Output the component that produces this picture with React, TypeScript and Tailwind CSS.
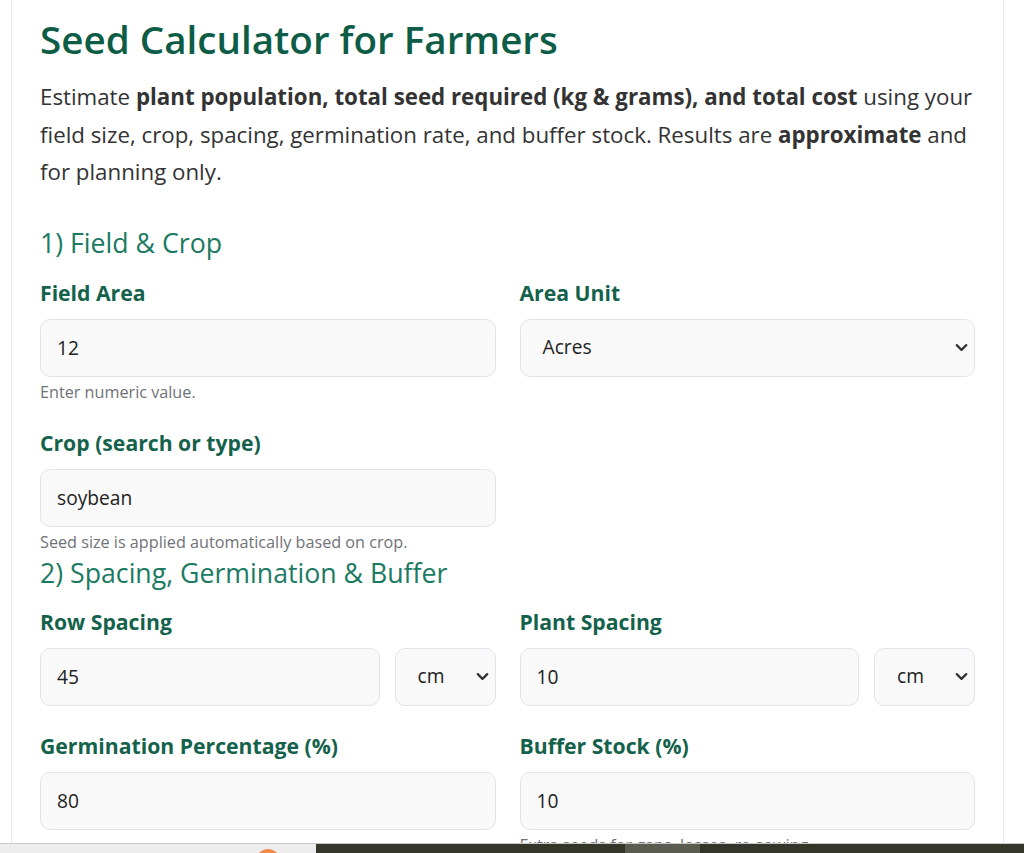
import { ChevronDown } from "lucide-react";

// field label
function Label({ children }: { children: React.ReactNode }) {
  return (
    <label className="block text-[21.2px] leading-[28px] font-bold text-[#14624b] mb-3">
      {children}
    </label>
  );
}

function TextInput({ value }: { value: string }) {
  return (
    <input
      defaultValue={value}
      className="block w-full h-[58px] rounded-[10px] border border-[#e2e4e8] bg-[#f9f9f9] px-4 text-[19.2px] text-[#222] outline-none"
    />
  );
}

function Select({ value, className }: { value: string; className?: string }) {
  return (
    <div
      className={
        "flex items-center justify-between h-[58px] rounded-[10px] border border-[#e2e4e8] bg-[#f9f9f9] pl-[22px] pr-[3px] text-[19.2px] text-[#222] " +
        (className ?? "")
      }
    >
      <span>{value}</span>
      <ChevronDown size={19} strokeWidth={2.8} className="text-[#333]" />
    </div>
  );
}

function Hint({ children }: { children: React.ReactNode }) {
  return (
    <p className="mt-1 text-[16.2px] leading-[22px] text-[#6f7276]">{children}</p>
  );
}

export default function App() {
  return (
    <div
      className="min-h-screen bg-white"
      style={{ fontFamily: '"Open Sans", "Noto Sans", sans-serif' }}
    >
      <div className="ml-[11px] w-[993px] border-x border-[#e8e9eb] bg-white px-[28px] pt-[16px] pb-10">
        <h1 className="text-[38.6px] leading-[46px] font-semibold text-[#0d5c46]">
          Seed Calculator for Farmers
        </h1>
        <p className="mt-[16px] text-[22.3px] leading-[37.5px] text-[#333]">
          Estimate{" "}
          <b className="font-bold">
            plant population, total seed required (kg &amp; grams), and total cost
          </b>{" "}
          using your field size, crop, spacing, germination rate, and buffer stock.
          Results are <b className="font-bold">approximate</b> and for planning only.
        </p>

        {/* section 1 */}
        <h2 className="mt-[32px] mb-[16px] text-[26.7px] leading-[40px] text-[#1b7a62]">
          1) Field &amp; Crop
        </h2>
        <div className="grid grid-cols-2 gap-x-6">
          <div className="mb-[26px]">
            <Label>Field Area</Label>
            <TextInput value="12" />
            <Hint>Enter numeric value.</Hint>
          </div>
          <div className="mb-[26px]">
            <Label>Area Unit</Label>
            <Select value="Acres" />
          </div>
          <div>
            <Label>Crop (search or type)</Label>
            <TextInput value="soybean" />
            <Hint>Seed size is applied automatically based on crop.</Hint>
          </div>
        </div>

        {/* section 2 */}
        <h2 className="mb-[15px] text-[26.7px] leading-[40px] text-[#1b7a62]">
          2) Spacing, Germination &amp; Buffer
        </h2>
        <div className="grid grid-cols-2 gap-x-6">
          <div className="mb-[26px]">
            <Label>Row Spacing</Label>
            <div className="flex gap-[15px]">
              <div className="flex-1">
                <TextInput value="45" />
              </div>
              <Select value="cm" className="w-[101px]" />
            </div>
          </div>
          <div className="mb-[26px]">
            <Label>Plant Spacing</Label>
            <div className="flex gap-[15px]">
              <div className="flex-1">
                <TextInput value="10" />
              </div>
              <Select value="cm" className="w-[101px]" />
            </div>
          </div>
          <div>
            <Label>Germination Percentage (%)</Label>
            <TextInput value="80" />
          </div>
          <div>
            <Label>Buffer Stock (%)</Label>
            <TextInput value="10" />
            <Hint>Extra seeds for gaps, losses, re-sowing.</Hint>
          </div>
        </div>
      </div>

      {/* taskbar strip captured at bottom of the screenshot */}
      <div className="fixed bottom-0 left-0 right-0 flex h-[10px] border-t border-[#c9c9c9]">
        <div className="relative w-[316px] overflow-hidden bg-[#ededed]">
          <div className="absolute left-[256px] top-[5px] h-[24px] w-[24px] rounded-full bg-[#f08a4b]" />
        </div>
        <div className="w-[309px] bg-[#35362a]" />
        <div className="w-[75px] bg-[#5b5c50]" />
        <div className="flex-1 bg-[#35362a]" />
      </div>
    </div>
  );
}
